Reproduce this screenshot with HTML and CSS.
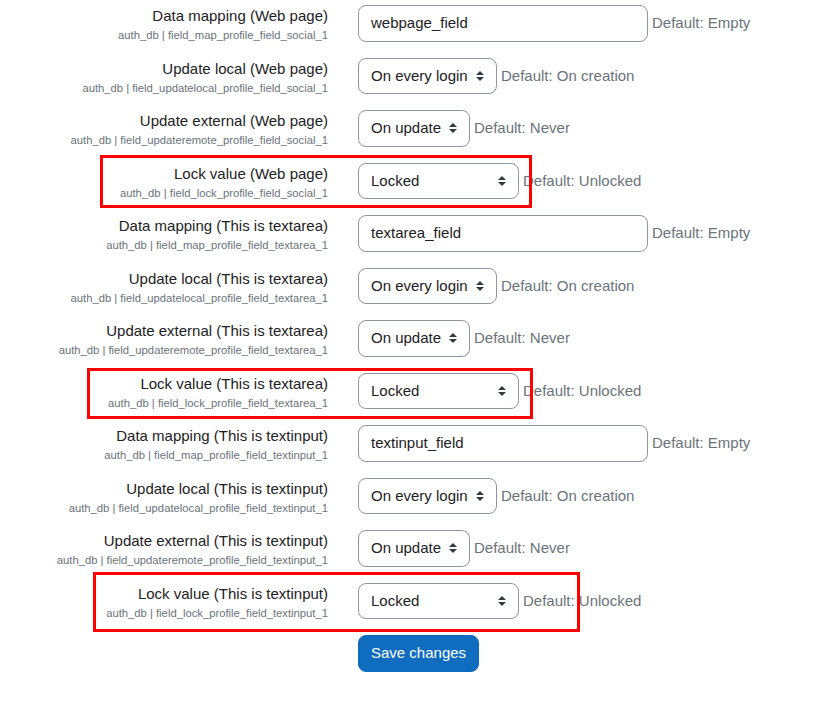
FILE: index.html
```html
<!DOCTYPE html>
<html lang="en">
<head>
<meta charset="utf-8">
<title>Data field mapping</title>
<link rel="stylesheet" href="styles.css">
</head>
<body>
<form class="settings">
  <div class="row">
    <div class="label"><div class="name">Data mapping (Web page)</div><div class="key">auth_db | field_map_profile_field_social_1</div></div>
    <div class="control"><div class="input">webpage_field</div><span class="default">Default: Empty</span></div>
  </div>
  <div class="row">
    <div class="label"><div class="name">Update local (Web page)</div><div class="key">auth_db | field_updatelocal_profile_field_social_1</div></div>
    <div class="control"><div class="select w-login">On every login<svg class="arrow" viewBox="0 0 4 5"><path d="M2 0L0 2h4zm0 5L0 3h4z"/></svg></div><span class="default">Default: On creation</span></div>
  </div>
  <div class="row">
    <div class="label"><div class="name">Update external (Web page)</div><div class="key">auth_db | field_updateremote_profile_field_social_1</div></div>
    <div class="control"><div class="select w-update">On update<svg class="arrow" viewBox="0 0 4 5"><path d="M2 0L0 2h4zm0 5L0 3h4z"/></svg></div><span class="default">Default: Never</span></div>
  </div>
  <div class="row">
    <div class="label"><div class="name">Lock value (Web page)</div><div class="key">auth_db | field_lock_profile_field_social_1</div></div>
    <div class="control"><div class="select w-lock">Locked<svg class="arrow" viewBox="0 0 4 5"><path d="M2 0L0 2h4zm0 5L0 3h4z"/></svg></div><span class="default">Default: Unlocked</span></div>
  </div>

  <div class="row">
    <div class="label"><div class="name">Data mapping (This is textarea)</div><div class="key">auth_db | field_map_profile_field_textarea_1</div></div>
    <div class="control"><div class="input">textarea_field</div><span class="default">Default: Empty</span></div>
  </div>
  <div class="row">
    <div class="label"><div class="name">Update local (This is textarea)</div><div class="key">auth_db | field_updatelocal_profile_field_textarea_1</div></div>
    <div class="control"><div class="select w-login">On every login<svg class="arrow" viewBox="0 0 4 5"><path d="M2 0L0 2h4zm0 5L0 3h4z"/></svg></div><span class="default">Default: On creation</span></div>
  </div>
  <div class="row">
    <div class="label"><div class="name">Update external (This is textarea)</div><div class="key">auth_db | field_updateremote_profile_field_textarea_1</div></div>
    <div class="control"><div class="select w-update">On update<svg class="arrow" viewBox="0 0 4 5"><path d="M2 0L0 2h4zm0 5L0 3h4z"/></svg></div><span class="default">Default: Never</span></div>
  </div>
  <div class="row">
    <div class="label"><div class="name">Lock value (This is textarea)</div><div class="key">auth_db | field_lock_profile_field_textarea_1</div></div>
    <div class="control"><div class="select w-lock">Locked<svg class="arrow" viewBox="0 0 4 5"><path d="M2 0L0 2h4zm0 5L0 3h4z"/></svg></div><span class="default">Default: Unlocked</span></div>
  </div>

  <div class="row">
    <div class="label"><div class="name">Data mapping (This is textinput)</div><div class="key">auth_db | field_map_profile_field_textinput_1</div></div>
    <div class="control"><div class="input">textinput_field</div><span class="default">Default: Empty</span></div>
  </div>
  <div class="row">
    <div class="label"><div class="name">Update local (This is textinput)</div><div class="key">auth_db | field_updatelocal_profile_field_textinput_1</div></div>
    <div class="control"><div class="select w-login">On every login<svg class="arrow" viewBox="0 0 4 5"><path d="M2 0L0 2h4zm0 5L0 3h4z"/></svg></div><span class="default">Default: On creation</span></div>
  </div>
  <div class="row">
    <div class="label"><div class="name">Update external (This is textinput)</div><div class="key">auth_db | field_updateremote_profile_field_textinput_1</div></div>
    <div class="control"><div class="select w-update">On update<svg class="arrow" viewBox="0 0 4 5"><path d="M2 0L0 2h4zm0 5L0 3h4z"/></svg></div><span class="default">Default: Never</span></div>
  </div>
  <div class="row">
    <div class="label"><div class="name">Lock value (This is textinput)</div><div class="key">auth_db | field_lock_profile_field_textinput_1</div></div>
    <div class="control"><div class="select w-lock">Locked<svg class="arrow" viewBox="0 0 4 5"><path d="M2 0L0 2h4zm0 5L0 3h4z"/></svg></div><span class="default">Default: Unlocked</span></div>
  </div>

  <div class="actions"><button type="button" class="btn">Save changes</button></div>

  <div class="mark mark-1"></div>
  <div class="mark mark-2"></div>
  <div class="mark mark-3"></div>
</form>
</body>
</html>
```

FILE: styles.css
```css
* { box-sizing: border-box; }
html, body { margin: 0; padding: 0; background: #fff; }
body {
  font-family: "Liberation Sans", Arial, sans-serif;
  font-size: 15px;
  color: #1d2125;
}
.settings {
  position: relative;
  padding-top: 5px;
  width: 823px;
  min-height: 705px;
}
.row {
  display: flex;
  align-items: flex-start;
  gap: 30px;
  margin-bottom: 16px;
  height: 36.5px;
}
.label {
  width: 328px;
  flex: none;
  text-align: right;
}
.name {
  line-height: 22px;
  white-space: nowrap;
}
.key {
  font-size: 11.25px;
  line-height: 14.5px;
  padding-top: 1px;
  color: #6a737b;
  white-space: nowrap;
}
.control {
  display: flex;
  align-items: center;
  gap: 4px;
}
.input, .select {
  height: 36.5px;
  border: 1px solid #8f959e;
  border-radius: 8px;
  padding: 0 12px;
  display: flex;
  align-items: center;
  line-height: 22.5px;
  color: #1d2125;
  background: #fff;
  white-space: nowrap;
}
.input { width: 290px; }
.select { justify-content: space-between; }
.w-login { width: 139px; }
.w-update { width: 112px; }
.w-lock { width: 161px; }
.arrow {
  width: 8px;
  height: 10px;
  fill: #343a40;
  flex: none;
}
.default {
  color: #6a737b;
  white-space: nowrap;
  margin-top: -1px;
}
.actions {
  padding-left: 358px;
}
.btn {
  font-family: inherit;
  font-size: 15px;
  line-height: 22.5px;
  color: #fff;
  background: #0f6cbf;
  border: 1px solid #0f6cbf;
  border-radius: 8px;
  padding: 6px 12px;
  height: 36.5px;
}
.mark {
  position: absolute;
  border: 3px solid #ff0000;
  pointer-events: none;
}
.mark-1 { left: 100px; top: 155px; width: 432px; height: 53px; }
.mark-2 { left: 87px; top: 368px; width: 446px; height: 51px; }
.mark-3 { left: 93px; top: 572px; width: 487px; height: 60px; }
```
